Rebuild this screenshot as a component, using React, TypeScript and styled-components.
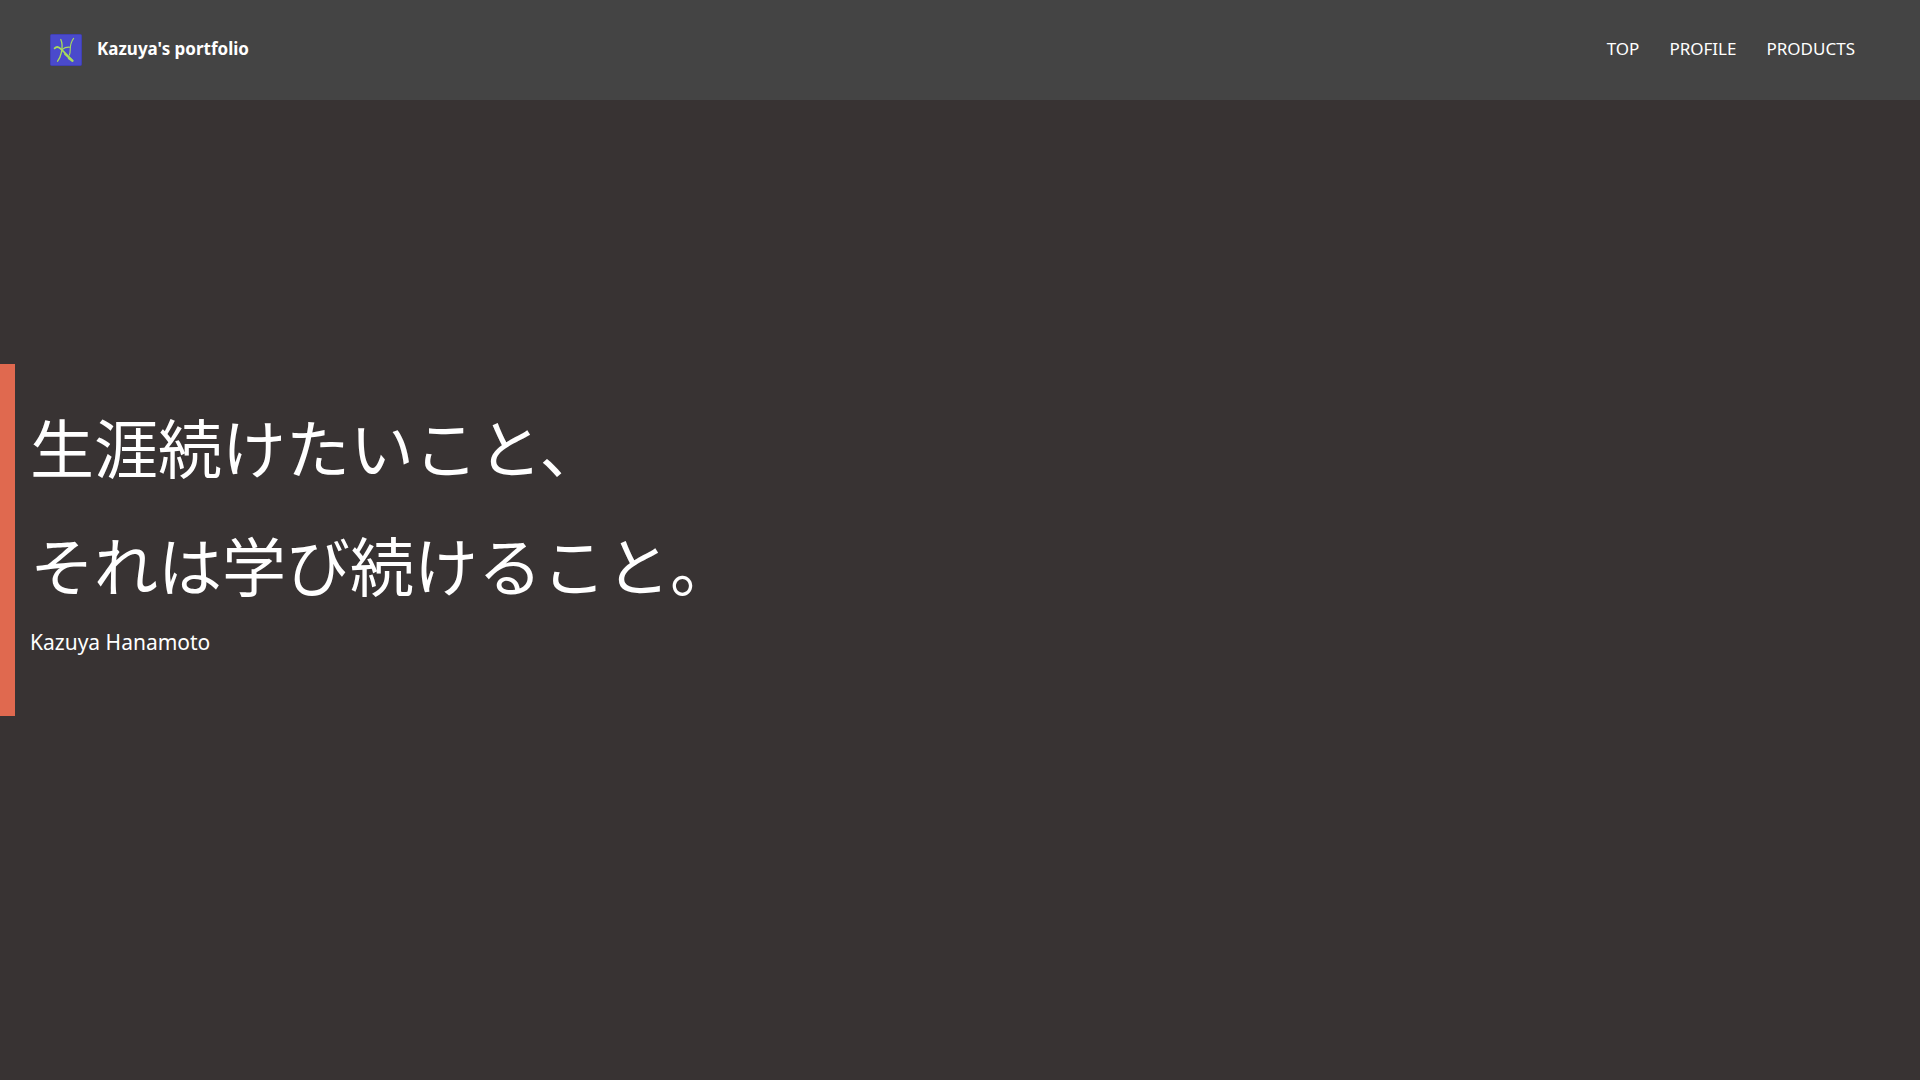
import React from "react";
import styled, { createGlobalStyle } from "styled-components";

const GlobalStyle = createGlobalStyle`
  *, *::before, *::after {
    box-sizing: border-box;
  }

  body {
    margin: 0;
    background: #383333;
    color: #fff;
    font-family: "Noto Sans", "Noto Sans CJK JP", sans-serif;
    font-size: 17px;
    line-height: 24px;
  }
`;

const Page = styled.div`
  display: flex;
  flex-direction: column;
  min-height: 100vh;
`;

const Header = styled.header`
  display: flex;
  align-items: center;
  justify-content: space-between;
  height: 100px;
  padding: 0 65px 0 50px;
  background: #444;
`;

const Brand = styled.a`
  display: flex;
  align-items: center;
  gap: 15px;
  color: inherit;
  font-weight: 700;
  text-decoration: none;
`;

const BrandName = styled.span`
  padding-bottom: 2px;
`;

const Nav = styled.nav`
  display: flex;
  gap: 30px;
  padding-bottom: 2px;
`;

const NavLink = styled.a`
  color: inherit;
  text-decoration: none;
`;

const Main = styled.main`
  display: flex;
  flex: 1;
  flex-direction: column;
  justify-content: center;
  padding-bottom: 100px;
`;

const Hero = styled.section`
  padding: 22px 15px 58px;
  border-left: 15px solid #e0694f;
`;

const Headline = styled.h1`
  margin: 0 0 4px;
  font-family: "Noto Sans CJK JP", sans-serif;
  font-size: 64px;
  font-weight: 400;
  line-height: 118px;
`;

const Author = styled.p`
  margin: 0;
  font-size: 21px;
  line-height: 32px;
`;

const Logo = () => (
  <svg width="32" height="32" viewBox="0 0 32 32" fill="none" aria-hidden="true">
    <rect x="0.5" y="0.5" width="31" height="31" rx="1" fill="#4a4acc" stroke="#4040b4" />
    <g stroke="#a8dc5c" strokeLinecap="round" strokeLinejoin="round">
      <path d="M10.8 5.5C12.4 9 12.4 14 11.4 18.5C10.6 22 9.4 25 7.6 27.2" strokeWidth="1.3" />
      <path d="M4.6 14.4C6.2 12.6 8.4 12.8 10.2 14.4C14 17.6 18.4 22.6 22.4 26.8" strokeWidth="1.7" />
      <path d="M15 20L22.6 26.8L18.8 24.4" strokeWidth="2" />
      <path d="M23.6 4.4C20.8 8 20.2 12 20.2 16C20.2 18 20 19.6 19.4 21" strokeWidth="1.1" />
      <path d="M12.4 15.4C14.6 13.4 17.4 13 20 13.2" strokeWidth="1.1" />
    </g>
  </svg>
);

const links = ["TOP", "PROFILE", "PRODUCTS"];

export default function App() {
  return (
    <Page>
      <GlobalStyle />
      <Header>
        <Brand href="#top">
          <Logo />
          <BrandName>Kazuya's portfolio</BrandName>
        </Brand>
        <Nav>
          {links.map((label) => (
            <NavLink key={label} href={`#${label.toLowerCase()}`}>
              {label}
            </NavLink>
          ))}
        </Nav>
      </Header>
      <Main id="top">
        <Hero>
          <Headline lang="ja">
            生涯続けたいこと、
            <br />
            それは学び続けること。
          </Headline>
          <Author>Kazuya Hanamoto</Author>
        </Hero>
      </Main>
    </Page>
  );
}
